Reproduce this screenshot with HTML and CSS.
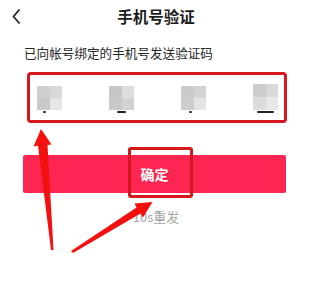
FILE: index.html
```html
<!DOCTYPE html>
<html lang="zh-CN">
<head>
<meta charset="utf-8">
<link rel="stylesheet" href="styles.css">
</head>
<body>
<div class="page">
  <header class="topbar">
    <svg class="back" width="24" height="32" viewBox="0 0 24 32"><polyline points="19.5,9.5 13.5,16.5 19.5,23.5" fill="none" stroke="#222" stroke-width="1.7"/></svg>
    <h1 class="title">手机号验证</h1>
    <span></span>
  </header>
  <p class="hint">已向帐号绑定的手机号发送验证码</p>
  <div class="code-row">
    <div class="cell">
      <div class="blur b1"><i></i><i></i><i></i><i></i></div>
      <span class="mark m1"></span>
    </div>
    <div class="cell">
      <div class="blur b2"><i></i><i></i><i></i><i></i></div>
      <span class="mark m2"></span>
    </div>
    <div class="cell">
      <div class="blur b3"><i></i><i></i><i></i><i></i></div>
      <span class="mark m3"></span>
    </div>
    <div class="cell">
      <div class="blur b4"><i></i><i></i><i></i><i></i></div>
      <span class="mark m4"></span>
    </div>
  </div>
  <div class="btn-wrap">
    <button class="confirm">确定</button>
    <span class="ann-box"></span>
  </div>
  <p class="resend">10s重发</p>
  <svg class="arrows" width="312" height="299" viewBox="0 0 312 299">
    <polygon fill="#f2110f" points="51,250 53.5,250 47.5,145 51.5,144.5 41,129 33.5,146.5 38,145.5"/>
    <polygon fill="#f2110f" points="71,251 73,253 140.5,213.5 143,217.5 152.5,202 134.5,203.5 136.5,207.5"/>
  </svg>
</div>
</body>
</html>
```

FILE: styles.css
```css
* { box-sizing: border-box; }
html, body { margin: 0; padding: 0; background: #fff; }
body {
  font-family: "Noto Sans CJK SC", "Noto Sans", sans-serif;
  color: #222;
}
.page {
  position: relative;
  width: 312px;
  height: 299px;
  overflow: hidden;
  display: flex;
  flex-direction: column;
}
.topbar {
  display: grid;
  grid-template-columns: 40px 1fr 40px;
  align-items: center;
  height: 32px;
}
.back { display: block; }
.title {
  margin: 0;
  text-align: center;
  font-size: 15.5px;
  font-weight: 700;
  line-height: 32px;
  color: #1c1c1c;
}
.hint {
  margin: 12px 0 0 24px;
  font-size: 12.6px;
  line-height: 18px;
  color: #262626;
}
.code-row {
  margin: 10px 25px 0 27px;
  height: 51px;
  border: 3px solid #d6181e;
  border-radius: 4px;
  display: flex;
  justify-content: space-between;
  padding: 11px 6px 0 7px;
}
.cell {
  width: 25px;
  display: flex;
  flex-direction: column;
  align-items: center;
}
.blur {
  width: 25px;
  height: 24px;
  display: grid;
  grid-template-columns: 1fr 1fr;
  grid-template-rows: 1fr 1fr;
}
.b4 { margin-top: -2px; height: 26px; }
.b1 i:nth-child(1) { background: #cfcfcf; }
.b1 i:nth-child(2) { background: #d8d8d8; }
.b1 i:nth-child(3) { background: #c9c9c9; }
.b1 i:nth-child(4) { background: #e6e6e6; }
.b2 i:nth-child(1) { background: #c6c6c6; }
.b2 i:nth-child(2) { background: #dedede; }
.b2 i:nth-child(3) { background: #c9c9c9; }
.b2 i:nth-child(4) { background: #d2d2d2; }
.b3 i:nth-child(1) { background: #cbcbcb; }
.b3 i:nth-child(2) { background: #d4d4d4; }
.b3 i:nth-child(3) { background: #cdcdcd; }
.b3 i:nth-child(4) { background: #e4e4e4; }
.b4 i:nth-child(1) { background: #cdcdcd; }
.b4 i:nth-child(2) { background: #d9d9d9; }
.b4 i:nth-child(3) { background: #dcdcdc; }
.b4 i:nth-child(4) { background: #e8e8e8; }
.mark {
  display: block;
  height: 2px;
  margin-top: 1px;
  background: #222;
  border-radius: 1px;
}
.m1 { width: 3px; margin-right: 10px; }
.m2 { width: 9px; }
.m3 { width: 3px; margin-right: 6px; }
.m4 { width: 17px; }
.btn-wrap {
  position: relative;
  margin: 32px 26px 0 23px;
}
.confirm {
  display: block;
  width: 100%;
  height: 38px;
  border: 0;
  border-radius: 2px;
  background: #fd2552;
  color: #fff;
  font-family: inherit;
  font-size: 14px;
  font-weight: 700;
  padding: 0;
}
.ann-box {
  position: absolute;
  left: 105px;
  top: -8px;
  width: 65px;
  height: 51px;
  border: 3px solid #d6181e;
  border-radius: 3px;
}
.resend {
  margin: 15px 0 0;
  text-align: center;
  font-size: 13px;
  line-height: 18px;
  color: #a6a6a6;
}
.arrows {
  position: absolute;
  left: 0;
  top: 0;
  pointer-events: none;
}
```
